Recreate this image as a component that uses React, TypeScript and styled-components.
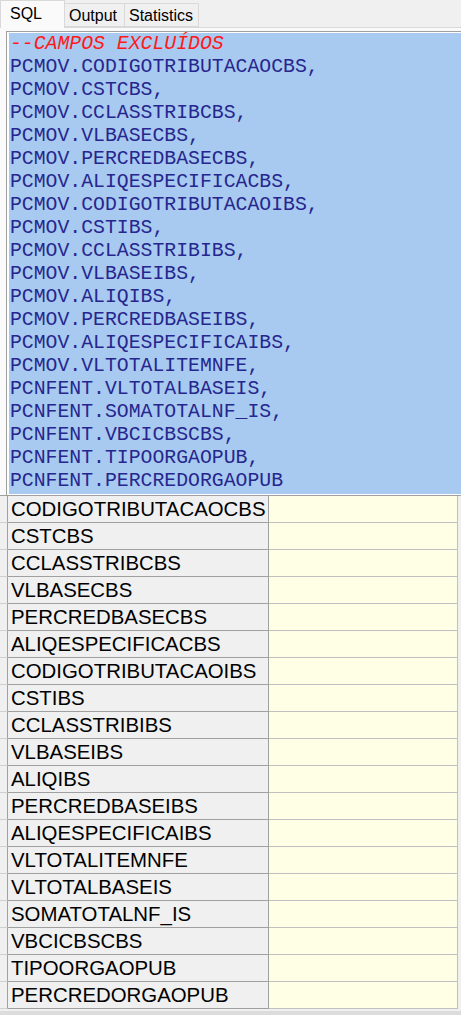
import React from "react";
import styled, { createGlobalStyle } from "styled-components";

const Global = createGlobalStyle`
  html, body { margin: 0; padding: 0; background: #f0f0f0; }
  #root { width: 461px; height: 1015px; }
`;

const Page = styled.div`
  width: 461px;
  height: 1015px;
  overflow: hidden;
  background: #f0f0f0;
  display: flex;
  flex-direction: column;
  font-family: "Liberation Sans", Arial, sans-serif;
`;

const TabBar = styled.div`
  height: 28px;
  display: flex;
  align-items: flex-end;
  box-sizing: border-box;
  border-bottom: 1px solid #d9d9d9;
  flex: none;
`;

const Tab = styled.div<{ $active?: boolean; $w: number }>`
  box-sizing: border-box;
  width: ${(p) => p.$w}px;
  height: ${(p) => (p.$active ? 28 : 24)}px;
  margin-bottom: ${(p) => (p.$active ? -1 : 0)}px;
  margin-left: ${(p) => (p.$active ? 0 : -1)}px;
  background: ${(p) => (p.$active ? "#fafafa" : "#f0f0f0")};
  border: 1px solid #d9d9d9;
  border-bottom: ${(p) => (p.$active ? "none" : "1px solid #d9d9d9")};
  font-size: 16px;
  color: #000;
  padding: ${(p) => (p.$active ? "4px 0 0 9px" : "3px 0 0 4px")};
  line-height: 18px;
  position: relative;
  z-index: ${(p) => (p.$active ? 1 : 0)};
`;

const Panel = styled.div`
  flex: none;
  background: #fafafa;
  padding: 3px 0 0 6px;
`;

const Editor = styled.div`
  border-top: 1px solid #a0a0a0;
  border-left: 1px solid #a0a0a0;
  background: #ffffff;
  padding: 1px 0 1px 2px;
`;

const Code = styled.div`
  background: #a8caf0;
  font-family: "Liberation Mono", "Courier New", monospace;
  font-size: 19.8px;
  line-height: 23px;
  white-space: pre;
  padding: 0 0 1px 1px;
`;

const CodeLine = styled.div<{ $comment?: boolean }>`
  height: 23px;
  color: ${(p) => (p.$comment ? "#ff1a1a" : "#26268e")};
  font-style: ${(p) => (p.$comment ? "italic" : "normal")};
`;

const Grid = styled.div`
  flex: none;
  display: flex;
  flex-direction: column;
  border-top: 1px solid #a0a0a0;
`;

const Row = styled.div`
  display: flex;
  height: 27px;
`;

const Gutter = styled.div`
  width: 7px;
  flex: none;
  background: #f0f0f0;
  border-right: 1px solid #a0a0a0;
  border-bottom: 1px solid #d0d0d0;
`;

const NameCell = styled.div`
  box-sizing: border-box;
  width: 261px;
  flex: none;
  background: #f0f0f0;
  border-right: 1px solid #a0a0a0;
  border-bottom: 1px solid #a0a0a0;
  font-size: 20.4px;
  line-height: 26px;
  padding-left: 3px;
  color: #000;
  white-space: nowrap;
  overflow: hidden;
`;

const ValueCell = styled.div`
  box-sizing: border-box;
  width: 189px;
  flex: none;
  background: #ffffe6;
  border-right: 1px solid #c0c0c0;
  border-bottom: 1px solid #c0c0c0;
`;

const Bottom = styled.div`
  flex: 1;
  background: #f0f0f0;
  border-top: 2px solid #f0f0f0;
`;

const Scroll = styled.div`
  height: 4px;
  background: #dcdcdc;
`;

const fields = [
  ["PCMOV", "CODIGOTRIBUTACAOCBS"],
  ["PCMOV", "CSTCBS"],
  ["PCMOV", "CCLASSTRIBCBS"],
  ["PCMOV", "VLBASECBS"],
  ["PCMOV", "PERCREDBASECBS"],
  ["PCMOV", "ALIQESPECIFICACBS"],
  ["PCMOV", "CODIGOTRIBUTACAOIBS"],
  ["PCMOV", "CSTIBS"],
  ["PCMOV", "CCLASSTRIBIBS"],
  ["PCMOV", "VLBASEIBS"],
  ["PCMOV", "ALIQIBS"],
  ["PCMOV", "PERCREDBASEIBS"],
  ["PCMOV", "ALIQESPECIFICAIBS"],
  ["PCMOV", "VLTOTALITEMNFE"],
  ["PCNFENT", "VLTOTALBASEIS"],
  ["PCNFENT", "SOMATOTALNF_IS"],
  ["PCNFENT", "VBCICBSCBS"],
  ["PCNFENT", "TIPOORGAOPUB"],
  ["PCNFENT", "PERCREDORGAOPUB"],
];

export default function App() {
  return (
    <Page>
      <Global />
      <TabBar>
        <Tab $active $w={65}>SQL</Tab>
        <Tab $w={61}>Output</Tab>
        <Tab $w={75}>Statistics</Tab>
      </TabBar>
      <Panel>
        <Editor>
          <Code>
            <CodeLine $comment>--CAMPOS EXCLUÍDOS</CodeLine>
            {fields.map(([t, f], i) => (
              <CodeLine key={f}>
                {t}.{f}
                {i < fields.length - 1 ? "," : ""}
              </CodeLine>
            ))}
          </Code>
        </Editor>
      </Panel>
      <Grid>
        {fields.map(([, f]) => (
          <Row key={f}>
            <Gutter />
            <NameCell>{f}</NameCell>
            <ValueCell />
          </Row>
        ))}
      </Grid>
      <Bottom>
        <Scroll />
      </Bottom>
    </Page>
  );
}
